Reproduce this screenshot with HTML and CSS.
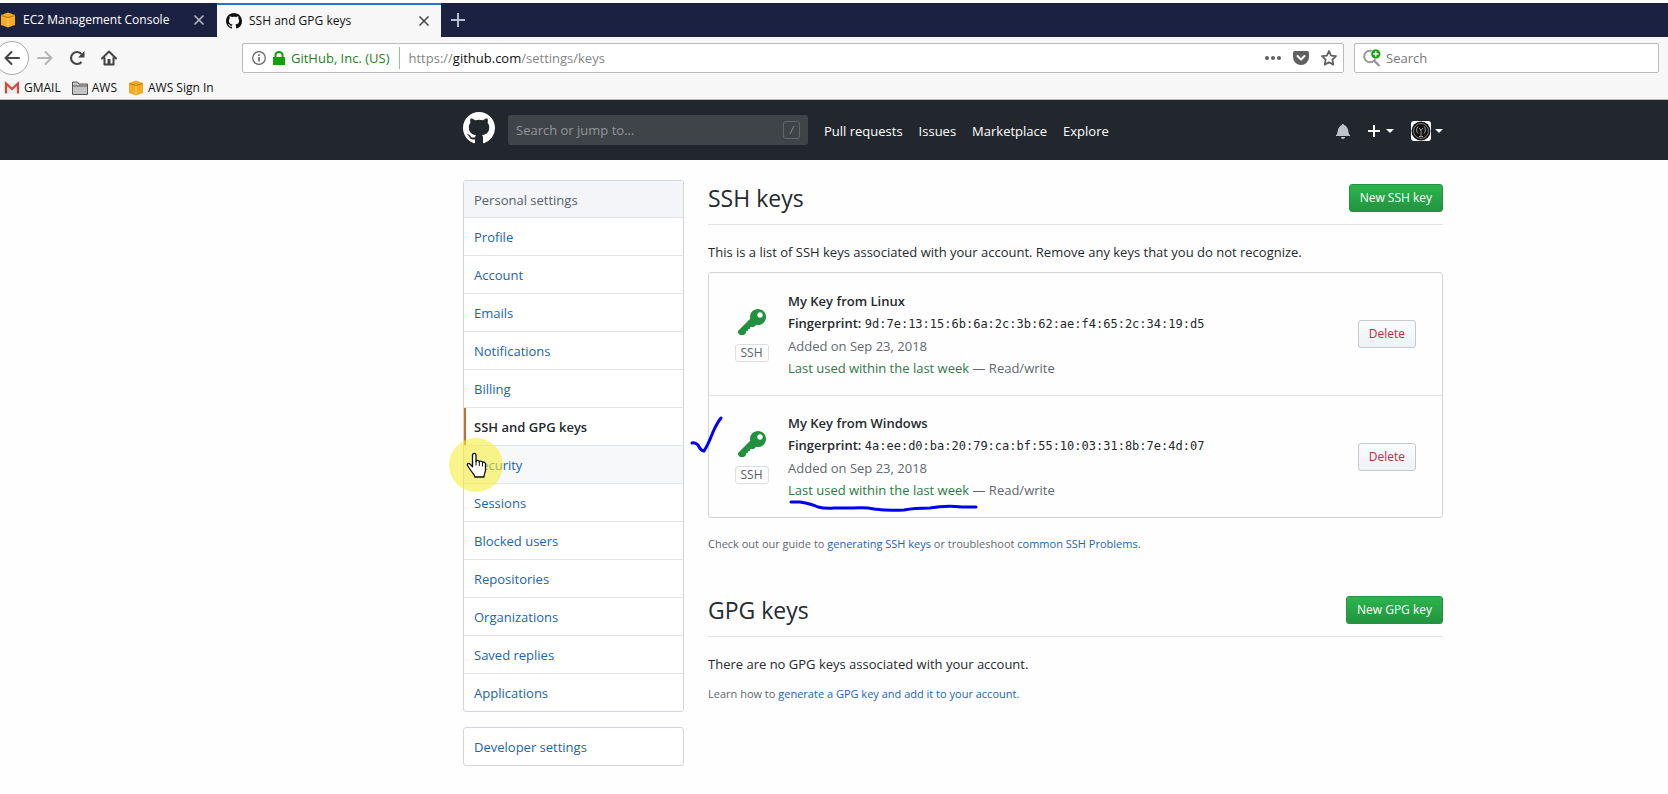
FILE: index.html
```html
<!DOCTYPE html>
<html lang="en">
<head>
<meta charset="utf-8">
<title>SSH and GPG keys</title>
<link rel="stylesheet" href="styles.css">
</head>
<body>
<svg class="defs" aria-hidden="true">
  <symbol id="cube" viewBox="0 0 16 16"><path fill="#f5ab22" d="M1 3 8 .5 15 3v10l-7 2.500L1 13z"/><path fill="none" stroke="#a8700f" stroke-width=".9" d="M1.500 3.500 8 5.500l6.500-2"/><path fill="none" stroke="#fbd27f" stroke-width="1" d="M8 6v9"/></symbol>
  <symbol id="mark" viewBox="0 0 16 16"><path fill="currentColor" fill-rule="evenodd" d="M8 0C3.580 0 0 3.580 0 8c0 3.540 2.290 6.530 5.470 7.590.4.070.55-.17.55-.38 0-.19-.01-.82-.01-1.490-2.010.37-2.530-.49-2.690-.94-.09-.23-.48-.94-.82-1.130-.28-.15-.68-.52-.01-.53.63-.01 1.080.58 1.230.82.72 1.210 1.870.87 2.330.66.070-.52.28-.87.51-1.070-1.780-.2-3.640-.89-3.640-3.950 0-.87.31-1.590.82-2.150-.08-.2-.36-1.020.08-2.120 0 0 .67-.21 2.200.82.64-.18 1.320-.27 2-.27s1.360.09 2 .27c1.530-1.040 2.200-.82 2.200-.82.44 1.100.16 1.920.08 2.120.51.56.82 1.270.82 2.150 0 3.070-1.870 3.750-3.650 3.950.29.25.54.73.54 1.480 0 1.070-.01 1.930-.01 2.200 0 .21.15.46.55.38A8.013 8.013 0 0 0 16 8c0-4.420-3.580-8-8-8z"/></symbol>
  <symbol id="close" viewBox="0 0 12 12"><path fill="none" stroke="currentColor" stroke-width="1.500" d="m1.500 1.500 9 9m0-9-9 9"/></symbol>
  <symbol id="key" viewBox="0 0 14 16"><path fill="currentColor" fill-rule="evenodd" d="M12.830 2.170C12.080 1.420 11.140 1.030 10 1c-1.130.03-2.080.42-2.830 1.170S6.040 3.860 6.010 5c0 .3.030.59.090.89L0 12v1l1 1h2l1-1v-1h1v-1h1v-1h2l1.090-1.110c.3.080.59.110.91.110 1.140-.03 2.080-.42 2.830-1.170S13.970 6.140 14 5c-.03-1.140-.42-2.080-1.170-2.830zM11 5.380c-.77 0-1.380-.61-1.380-1.380 0-.77.61-1.380 1.380-1.380.77 0 1.380.61 1.380 1.380 0 .77-.61 1.380-1.380 1.380z"/></symbol>
</svg>

<div class="browser">
  <div class="tabs">
    <div class="tab tab-first"><svg class="i16"><use href="#cube"/></svg><span class="tab-title">EC2 Management Console</span><button class="plain" aria-label="Close EC2 tab"><svg class="i12"><use href="#close"/></svg></button></div>
    <div class="tab active"><svg class="i16"><use href="#mark"/></svg><span class="tab-title">SSH and GPG keys</span><button class="plain" aria-label="Close SSH tab"><svg class="i12"><use href="#close"/></svg></button></div>
    <button class="plain new-tab" aria-label="New tab"><svg class="i14" viewBox="0 0 14 14"><path stroke="currentColor" stroke-width="2" d="M7 0v14M0 7h14"/></svg></button>
  </div>
  <div class="toolbar">
    <div class="nav-buttons">
      <button class="plain back" aria-label="Back"><svg class="i16" viewBox="0 0 16 16"><path fill="none" stroke="currentColor" stroke-width="2" stroke-linecap="round" stroke-linejoin="round" d="M15 8H1.500M7.500 2l-6 6 6 6"/></svg></button>
      <button class="plain forward" aria-label="Forward"><svg class="i16" viewBox="0 0 16 16"><path fill="none" stroke="currentColor" stroke-width="2" stroke-linecap="round" stroke-linejoin="round" d="M1 8h13.500M8.500 2l6 6-6 6"/></svg></button>
      <button class="plain" aria-label="Reload"><svg class="i16" viewBox="0 0 16 16"><path fill="none" stroke="currentColor" stroke-width="2.200" d="M12.500 12A6 6 0 1 1 12.500 4"/><path fill="currentColor" d="M15.500 1v6.500H9z"/></svg></button>
      <button class="plain" aria-label="Home"><svg class="i16" viewBox="0 0 16 16"><path fill="none" stroke="currentColor" stroke-width="2" stroke-linejoin="round" stroke-linecap="round" d="m1 8.500 7-7 7 7M3.500 8v6.500h9V8"/><path fill="currentColor" d="M6.500 9h3v5.500h-3z"/></svg></button>
    </div>
    <div class="url">
      <svg class="i14" viewBox="0 0 14 14"><circle cx="7" cy="7" r="6.300" fill="none" stroke="currentColor" stroke-width="1.200"/><path stroke="currentColor" stroke-width="1.600" d="M7 6v4.500M7 3.300v1.600"/></svg>
      <svg class="lock" viewBox="0 0 12 14"><path fill="#12a10c" d="M0 6h12v8H0z"/><path fill="none" stroke="#12a10c" stroke-width="2" d="M2.500 7V4a3.500 3 0 0 1 7 0v3"/></svg>
      <span class="identity">GitHub, Inc. (US)</span>
      <span class="address">https://<b>github.com</b>/settings/keys</span>
      <svg class="dots" viewBox="0 0 16 4"><g fill="currentColor"><circle cx="2" cy="2" r="2"/><circle cx="8" cy="2" r="2"/><circle cx="14" cy="2" r="2"/></g></svg>
      <svg class="i16" viewBox="0 0 16 16"><path fill="currentColor" d="M2 1h12a2 2 0 0 1 2 2v4a8 8 0 0 1-16 0V3a2 2 0 0 1 2-2z"/><path fill="none" stroke="#fff" stroke-width="2" stroke-linecap="round" stroke-linejoin="round" d="M4.500 6 8 9.500 11.500 6"/></svg>
      <svg class="i16" viewBox="0 0 16 16"><path fill="none" stroke="currentColor" stroke-width="1.800" stroke-linejoin="round" d="m8 1 2.100 4.600 4.900.6-3.600 3.400.9 5L8 12.200l-4.300 2.400.9-5L1 6.200l4.900-.6z"/></svg>
    </div>
    <label class="web-search">
      <svg class="find" viewBox="0 0 18 18"><circle cx="7" cy="7.500" r="5.800" fill="none" stroke="#999" stroke-width="2"/><path stroke="#999" stroke-width="2.400" d="m11 11.500 5.500 5.500"/><circle cx="12.800" cy="5" r="4.900" fill="#12a10c" stroke="#fff" stroke-width=".6"/><path stroke="#fff" stroke-width="1.400" d="M12.800 2.300v5.400M10.100 5h5.400"/></svg>
      <input type="text" placeholder="Search" aria-label="Web search">
    </label>
  </div>
  <div class="bookmarks">
    <a href="#"><svg class="i16" viewBox="0 0 16 16"><path fill="#eee" d="M2 3h12v10H2z"/><path fill="none" stroke="#d5493a" stroke-width="2.200" d="M2 13.500v-10L8 9l6-5.500v10"/></svg>GMAIL</a>
    <a href="#"><svg class="i16" viewBox="0 0 16 16"><path fill="#c4c4c4" stroke="#555" d="M.5 2h5l1.500 2h8.500v10.500H.5z"/><path stroke="#555" d="M1 6h14.500"/></svg>AWS</a>
    <a href="#"><svg class="i16"><use href="#cube"/></svg>AWS Sign In</a>
  </div>
</div>

<header class="gh-header">
  <div class="gh-bar">
    <a href="#" class="logo" aria-label="GitHub"><svg class="i32"><use href="#mark"/></svg></a>
    <label class="jump"><input type="text" placeholder="Search or jump to..." aria-label="Search or jump to"><span class="slash"><svg viewBox="0 0 8 10"><path stroke="currentColor" d="M6 1 2 9"/></svg></span></label>
    <nav class="gh-nav"><a href="#">Pull requests</a><a href="#">Issues</a><a href="#">Marketplace</a><a href="#">Explore</a></nav>
    <div class="user">
      <button class="plain" aria-label="Notifications"><svg class="i16 bell" viewBox="0 0 14 16"><path fill="currentColor" fill-rule="evenodd" d="M14 12v1H0v-1l.73-.58c.77-.77.81-2.550 1.190-4.420C2.690 3.230 6 2 6 2c0-.55.45-1 1-1s1 .45 1 1c0 0 3.390 1.230 4.160 5 .38 1.880.42 3.660 1.190 4.420l.66.58H14zm-7 4c1.110 0 2-.89 2-2H5c0 1.110.89 2 2 2z"/></svg></button>
      <button class="plain create" aria-label="Create new"><svg class="i12" viewBox="0 0 12 12"><path stroke="currentColor" stroke-width="2" d="M6 0v12M0 6h12"/></svg><i class="caret"></i></button>
      <button class="plain" aria-label="Account"><svg class="avatar" viewBox="0 0 20 20"><rect width="20" height="20" rx="3" fill="#fff"/><circle cx="10" cy="10" r="9.500" fill="#111"/><g fill="none" stroke="#999"><circle cx="10" cy="10" r="7.500" stroke-width=".8"/><path d="M7 5.500a5 5 0 0 0 0 7M13 5.500a5 5 0 0 1 0 7M8 7l2 2.500L12 7M10 9v6M8 15.500h4"/></g></svg><i class="caret"></i></button>
    </div>
  </div>
</header>

<main class="page">
  <aside>
    <nav class="menu">
      <h3>Personal settings</h3>
      <a href="#">Profile</a><a href="#">Account</a><a href="#">Emails</a><a href="#">Notifications</a><a href="#">Billing</a>
      <a href="#" class="selected">SSH and GPG keys</a>
      <a href="#" class="hover">Security<span class="pointer"><svg viewBox="0 0 56 56"><circle cx="28" cy="28" r="27" fill="#f7ef3c" fill-opacity=".6"/><path fill="#fff" stroke="#111" stroke-width="1.300" stroke-linejoin="round" d="M24.500 18.500c0-2.800 3.500-2.800 3.500 0v6c0-1.500 3.300-1.500 3.300.5 0-1.500 3.200-1.200 3.200.8 0-1.300 3-1 3 1.200v6c0 2.500-1.500 3.500-1.500 7h-9c-1-3.500-3-4.500-4.500-7l-3-4.500c-.8-2 1.300-2.700 2.700-1.200l2.300 2.400z"/><path stroke="#111" d="M28 24v4.500M31.300 25v4M34.500 26v3.500"/></svg></span></a>
      <a href="#">Sessions</a><a href="#">Blocked users</a><a href="#">Repositories</a><a href="#">Organizations</a><a href="#">Saved replies</a><a href="#">Applications</a>
    </nav>
    <nav class="menu"><a href="#">Developer settings</a></nav>
  </aside>

  <div class="content">
    <section>
      <div class="subhead"><h2>SSH keys</h2><button class="btn primary">New SSH key</button></div>
      <p>This is a list of SSH keys associated with your account. Remove any keys that you do not recognize.</p>
      <ul class="keys">
        <li>
          <div class="kind"><svg class="i32"><use href="#key"/></svg><span>SSH</span></div>
          <div class="info"><strong>My Key from Linux</strong><div><strong>Fingerprint:</strong> <code>9d:7e:13:15:6b:6a:2c:3b:62:ae:f4:65:2c:34:19:d5</code></div><div class="muted">Added on Sep 23, 2018</div><div class="muted"><span class="used">Last used within the last week</span> — Read/write</div></div>
          <button class="btn danger">Delete</button>
        </li>
        <li>
          <svg class="tick" viewBox="0 0 36 40"><path d="M3 28q3-1 6 2 3 6 6 6 4-6 9-19Q28 8 32 3"/></svg>
          <div class="kind"><svg class="i32"><use href="#key"/></svg><span>SSH</span></div>
          <div class="info"><strong>My Key from Windows</strong><div><strong>Fingerprint:</strong> <code>4a:ee:d0:ba:20:79:ca:bf:55:10:03:31:8b:7e:4d:07</code></div><div class="muted">Added on Sep 23, 2018</div><div class="muted"><span class="used">Last used within the last week<svg class="underline" viewBox="0 0 190 12"><path d="M3 2h9q12 2 18 5 8 2 16 1h18q14-1 22 1 14 2 30 1 10-2 26-2 16-3 32-1h14"/></svg></span> — Read/write</div></div>
          <button class="btn danger">Delete</button>
        </li>
      </ul>
      <p class="note">Check out our guide to <a href="#">generating SSH keys</a> or troubleshoot <a href="#">common SSH Problems.</a></p>
    </section>
    <section>
      <div class="subhead"><h2>GPG keys</h2><button class="btn primary">New GPG key</button></div>
      <p>There are no GPG keys associated with your account.</p>
      <p class="note">Learn how to <a href="#">generate a GPG key and add it to your account.</a></p>
    </section>
  </div>
</main>
</body>
</html>
```
FILE: styles.css
```css
* { box-sizing: border-box; }
body { margin: 0; padding-top: 3px; background: #fefefe; color: #24292e; font: 13px/22px "Open Sans", "Noto Sans", sans-serif; }
a { color: #1a64b4; text-decoration: none; }
h2, h3, p, ul { margin: 0; padding: 0; font-weight: 400; }
svg { display: block; flex: none; }
input, button { font: inherit; color: inherit; }
.defs { position: absolute; width: 0; height: 0; }
.i12 { width: 12px; height: 12px; }
.i14 { width: 14px; height: 14px; }
.i16 { width: 16px; height: 16px; }
.i32 { width: 32px; height: 32px; }
.plain { display: flex; align-items: center; gap: 4px; padding: 0; border: 0; background: none; }

/* Browser window */
.browser { background: #f7f7f8; color: #111; font-size: 12px; border-bottom: 1px solid #bbb; }
.tabs { display: flex; height: 34px; background: #1b2141; color: #fff; }
.tab { display: flex; align-items: center; gap: 7px; width: 224px; padding: 0 11px 0 9px; }
.tab-first { width: 217px; padding: 0 12px 0 0; }
.tab-title { flex: 1; }
.tab .plain { color: #b9bcc9; }
.tab.active { background: #f7f7f8; color: #111; border-top: 2px solid #2673c8; }
.tab.active .plain { color: #444; }
.new-tab { margin-left: 10px; color: #b9bcc9; }
.toolbar { display: flex; align-items: center; height: 41px; padding-right: 9px; color: #444; }
.nav-buttons { display: flex; align-items: center; gap: 16px; width: 242px; }
.back { justify-content: center; width: 34px; height: 34px; margin-left: -5px; border: 1px solid #aaa; border-radius: 50%; background: #fff; }
.forward { color: #b5b5b5; margin-left: -8px; }
.url, .web-search { display: flex; align-items: center; height: 30px; border: 1px solid #bbb; border-radius: 2px; background: #fff; }
.url { flex: 1; gap: 12px; padding: 0 6px 0 9px; color: #606060; font-size: 13px; }
.lock { width: 12px; height: 14px; margin-left: -5px; }
.identity { color: #238023; margin-left: -6px; padding-right: 9px; border-right: 1px solid #8ccb8c; }
.address { flex: 1; margin-left: -3px; color: #858585; }
.address b { font-weight: 400; color: #111; }
.dots { width: 16px; height: 4px; }
.web-search { width: 305px; margin-left: 10px; padding: 0 8px; gap: 5px; }
.find { width: 18px; height: 18px; }
.web-search input { width: 100%; border: 0; padding: 0; background: none; font-size: 13px; }
.web-search input::placeholder { color: #777; }
.bookmarks { display: flex; gap: 11px; height: 21px; padding: 2px 0 0 4px; }
.bookmarks a { display: flex; align-items: center; gap: 4px; height: 16px; color: #111; }

/* Site header and page share one set of side margins */
.gh-header { display: grid; grid-template-columns: 463fr 980px 225fr; height: 60px; background: #22272e; color: #fff; }
.page { display: grid; grid-template-columns: 463fr 221px 24px 735px 225fr; padding-top: 20px; }
.gh-bar, .page aside { grid-column: 2; }
.page .content { grid-column: 4; }
.gh-bar { display: flex; align-items: center; }
.logo { color: #fff; align-self: flex-start; margin-top: 12px; }
.jump { display: flex; align-items: center; width: 300px; height: 30px; margin-left: 13px; padding: 0 8px; border-radius: 3px; background: #3f4449; }
.jump input { flex: 1; min-width: 0; padding: 0; border: 0; background: none; }
.jump input::placeholder { color: #92969a; }
.slash { display: flex; align-items: center; justify-content: center; width: 17px; height: 18px; border: 1px solid #61666b; border-radius: 3px; color: #868b90; }
.slash svg { width: 8px; height: 10px; }
.gh-nav { display: flex; gap: 16px; margin-left: 16px; padding-top: 2px; font-weight: 500; }
.gh-nav a { color: #fff; }
.user { display: flex; align-items: center; gap: 17px; margin-left: auto; padding-top: 2px; }
.bell { color: #bfc3c7; }
.create { gap: 6px; }
.caret { border: 4px solid transparent; border-top-color: currentColor; border-bottom: 0; }
.avatar { width: 20px; height: 20px; }

/* Settings menu */
.menu { border: 1px solid #d1d5da; border-radius: 3px; background: #fff; margin-bottom: 15px; }
.menu h3, .menu a { position: relative; display: block; height: 38px; padding: 8px 10px; border-bottom: 1px solid #e1e4e8; font-size: 13px; line-height: 22px; }
.menu h3 { height: 37px; background: #f3f5f8; color: #586069; font-weight: 500; }
.menu > :last-child { height: 37px; border-bottom: 0; }
.menu .selected { color: #24292e; font-weight: 600; }
.menu .selected::before { content: ""; position: absolute; inset: 0 auto 0 0; width: 2px; background: #c76f32; }
.menu .hover { background: #f6f8fa; }
.pointer { position: absolute; left: -16px; top: -9px; z-index: 1; width: 56px; height: 56px; }

/* Key lists */
.subhead { display: flex; justify-content: space-between; align-items: center; height: 45px; padding-bottom: 8px; border-bottom: 1px solid #e1e4e8; margin-bottom: 16px; }
.subhead h2 { font-size: 23px; line-height: 30px; }
.btn { height: 28px; padding: 0 10px; border: 1px solid #c5c9cd; border-radius: 3px; background: linear-gradient(#fafbfc, #eff3f6); font-size: 12px; line-height: 20px; }
.primary { border-color: #279041; background: linear-gradient(#2bb44c, #239440); color: #fff; }
.danger { color: #bf2c38; }
.keys { margin-top: 9px; border: 1px solid #d1d5da; border-radius: 3px; list-style: none; }
.keys li { position: relative; display: flex; align-items: center; height: 122px; padding: 0 26px; }
.keys li + li { border-top: 1px solid #e1e4e8; }
.kind { display: flex; flex-direction: column; align-items: center; gap: 5px; width: 33px; color: #22913f; }
.kind span { padding: 0 5px; border: 1px solid #dcdfe2; border-radius: 3px; color: #586069; font-size: 12px; line-height: 16px; }
.info { flex: 1; margin-left: 20px; }
.info > strong { display: block; }
strong { font-weight: 600; }
code { font: 12px/22px "DejaVu Sans Mono", monospace; }
.muted { color: #62686e; }
.used { position: relative; color: #2c7a43; }
.note { margin-top: 8px; color: #62686e; font-size: 11px; }
.keys + .note { margin-top: 15px; }
.content section + section { margin-top: 37px; }

/* Pen marks */
.tick, .underline { position: absolute; fill: none; stroke: #0000f0; stroke-width: 3; stroke-linecap: round; }
.tick { left: -20px; top: 19px; width: 36px; height: 40px; }
.underline { left: 0; top: 19px; width: 190px; height: 12px; }
```
